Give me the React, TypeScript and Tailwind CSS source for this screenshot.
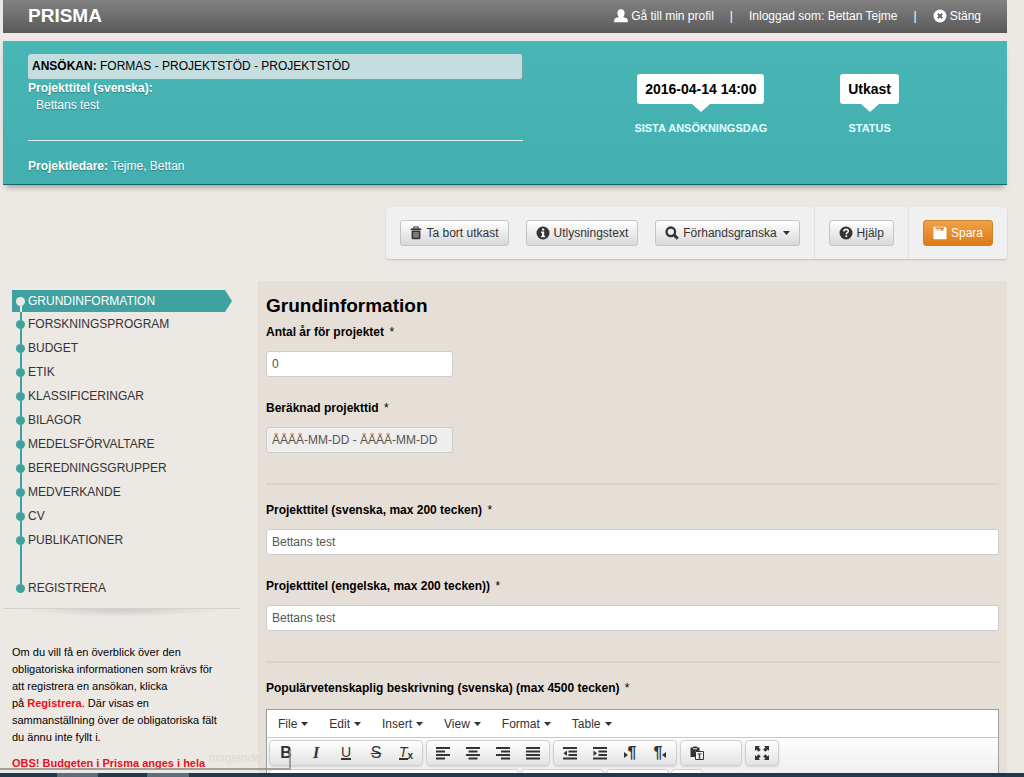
import React from 'react';
import clsx from 'clsx';

const steps = [
  'GRUNDINFORMATION',
  'FORSKNINGSPROGRAM',
  'BUDGET',
  'ETIK',
  'KLASSIFICERINGAR',
  'BILAGOR',
  'MEDELSFÖRVALTARE',
  'BEREDNINGSGRUPPER',
  'MEDVERKANDE',
  'CV',
  'PUBLIKATIONER',
];

const editorMenus = ['File', 'Edit', 'Insert', 'View', 'Format', 'Table'];

const UserIcon = () => (
  <svg viewBox="0 0 14 14" className="w-[14px] h-[14px]" fill="currentColor" aria-hidden="true">
    <path d="M7 .3c2.300 0 3.600 1.500 3.600 3.600 0 1.700-.6 2.800-1.300 3.500v.6c1.300.6 3.400 1 4 2 .5.800.6 2.100.6 3.300H.1c0-1.200.1-2.500.6-3.300.6-1 2.700-1.400 4-2v-.6C4 6.700 3.400 5.600 3.400 3.900 3.400 1.800 4.700.3 7 .3z" />
  </svg>
);

const CloseIcon = () => (
  <svg viewBox="0 0 14 14" className="w-[14px] h-[14px]" aria-hidden="true">
    <circle cx="7" cy="7" r="6.500" fill="currentColor" />
    <path d="M4.800 4.800l4.400 4.400M9.200 4.800L4.800 9.200" stroke="#6a6a6a" strokeWidth="2" />
  </svg>
);

const TrashIcon = () => (
  <svg viewBox="0 0 12 14" className="w-[12px] h-[14px]" aria-hidden="true">
    <path d="M4 2.500V1h4v1.500" stroke="currentColor" strokeWidth="1.200" fill="none" />
    <path d="M.8 3.200h10.400" stroke="currentColor" strokeWidth="1.600" />
    <path d="M1.600 4.600h8.800V12a1.200 1.200 0 0 1-1.200 1.200H2.800A1.200 1.200 0 0 1 1.600 12z" fill="currentColor" />
    <path d="M4 6v5.600M6 6v5.600M8 6v5.600" stroke="#e4e4e4" strokeWidth="0.800" />
  </svg>
);

const InfoIcon = () => (
  <svg viewBox="0 0 14 14" className="w-[14px] h-[14px]" aria-hidden="true">
    <circle cx="7" cy="7" r="6.500" fill="currentColor" />
    <path d="M6 2.500h2.200v2H6zM5 5.500h3.200v4.300h1v1.400H5V9.800h1V6.900H5z" fill="#f2f2f2" />
  </svg>
);

const SearchIcon = () => (
  <svg viewBox="0 0 14 14" className="w-[14px] h-[14px]" fill="none" stroke="currentColor" aria-hidden="true">
    <circle cx="5.800" cy="5.800" r="4.300" strokeWidth="2.300" />
    <path d="M8.800 8.800l4 4" strokeWidth="3" />
  </svg>
);

const HelpIcon = () => (
  <svg viewBox="0 0 14 14" className="w-[14px] h-[14px]" aria-hidden="true">
    <circle cx="7" cy="7" r="6.500" fill="currentColor" />
    <path d="M4.900 5.400c0-1.300.9-2 2.200-2s2.200.7 2.200 1.800c0 1.500-2 1.500-2 3" stroke="#f2f2f2" strokeWidth="1.600" fill="none" />
    <path d="M6.400 9.300h1.800V11H6.400z" fill="#f2f2f2" />
  </svg>
);

const SaveIcon = () => (
  <svg viewBox="0 0 14 14" className="w-[14px] h-[14px]" aria-hidden="true">
    <path d="M.5.800h11.500l1.500 1.500v11H.5z" fill="currentColor" />
    <path d="M2.500 1.500h8.500v3.500H2.500z" fill="#f7dab6" />
    <path d="M2.500 1.500h8.500v1.200H2.500zM8 1.500h2v3H8z" fill="#c98d45" />
  </svg>
);

const Caret = () => (
  <svg viewBox="0 0 7 4" className="w-[7px] h-[4px]" fill="currentColor" aria-hidden="true">
    <path d="M0 0h7L3.500 4z" />
  </svg>
);

const Lines = ({ d, arrow }: { d: string; arrow?: string }) => (
  <svg viewBox="0 0 14 14" className="w-[14px] h-[14px]" aria-hidden="true">
    <path d={d} stroke="currentColor" strokeWidth="2" fill="none" />
    {arrow && <path d={arrow} fill="currentColor" />}
  </svg>
);

const PasteIcon = () => (
  <svg viewBox="0 0 14 14" className="w-[14px] h-[14px]" aria-hidden="true">
    <path d="M.5 1.500h2.500V.5h4v1h2.500V5H5v6H.5z" fill="currentColor" />
    <path d="M3 2.800h4" stroke="#eee" strokeWidth="1" />
    <path d="M5.500 5.500h8v8h-8z" fill="#f4f4f4" stroke="currentColor" strokeWidth="1" />
    <path d="M7.500 8h4M9.500 8v4M8.500 12h2" stroke="currentColor" strokeWidth="1.200" />
  </svg>
);

const FullscreenIcon = () => (
  <svg viewBox="0 0 14 14" className="w-[14px] h-[14px]" aria-hidden="true">
    <path d="M0 0h5L3.600 1.400 5.800 3.600 3.600 5.800 1.400 3.600 0 5zM14 0v5l-1.400-1.400-2.200 2.200-2.200-2.200 2.200-2.200L9 0zM0 14V9l1.400 1.400 2.200-2.200 2.200 2.200-2.200 2.200L5 14zM14 14H9l1.400-1.400-2.200-2.200 2.200-2.200 2.200 2.200L14 9z" fill="currentColor" />
  </svg>
);

const alignLeft = 'M0 2h14M0 5.500h9M0 9h14M0 12.500h9';
const alignCenter = 'M0 2h14M2.500 5.500h9M0 9h14M2.500 12.500h9';
const alignRight = 'M0 2h14M5 5.500h9M0 9h14M5 12.500h9';
const justify = 'M0 2h14M0 5.500h14M0 9h14M0 12.500h14';
const indentLines = 'M0 2h14M5.500 5.500h8.500M5.500 9h8.500M0 12.500h14';

const formatGroup = [
  { name: 'Bold', icon: <span className="text-base font-bold">B</span> },
  { name: 'Italic', icon: <span className="font-[Liberation_Serif,serif] text-base font-bold italic">I</span> },
  { name: 'Underline', icon: <span className="border-b-2 border-[#333] text-sm leading-[12px]">U</span> },
  { name: 'Strikethrough', icon: <span className="text-base line-through">S</span> },
  {
    name: 'Clear formatting',
    icon: (
      <span className="flex items-end">
        <span className="border-b-2 border-[#333] text-sm italic leading-[12px]">T</span>
        <span className="text-[10px] leading-[8px] font-bold">x</span>
      </span>
    ),
  },
];

const alignGroup = [
  { name: 'Align left', icon: <Lines d={alignLeft} /> },
  { name: 'Align center', icon: <Lines d={alignCenter} /> },
  { name: 'Align right', icon: <Lines d={alignRight} /> },
  { name: 'Justify', icon: <Lines d={justify} /> },
];

const indentGroup = [
  { name: 'Decrease indent', icon: <Lines d={indentLines} arrow="M4 4.500v5.500L.5 7.200z" /> },
  { name: 'Increase indent', icon: <Lines d={indentLines} arrow="M.5 4.500v5.500L4 7.200z" /> },
  {
    name: 'Left to right',
    icon: (
      <span className="flex items-center">
        <svg viewBox="0 0 4 6" className="mt-1 w-[4px] h-[6px]" fill="currentColor" aria-hidden="true"><path d="M0 0v6l4-3z" /></svg>
        <span className="text-base font-bold">¶</span>
      </span>
    ),
  },
  {
    name: 'Right to left',
    icon: (
      <span className="flex items-center">
        <span className="text-base font-bold">¶</span>
        <svg viewBox="0 0 4 6" className="mt-1 w-[4px] h-[6px]" fill="currentColor" aria-hidden="true"><path d="M4 0v6L0 3z" /></svg>
      </span>
    ),
  },
];

interface Tool {
  name: string;
  icon: React.ReactNode;
  wide?: boolean;
}

const ToolGroup = ({ tools }: { tools: Tool[] }) => (
  <div className="flex rounded-sm border border-[#cfcfcf] bg-linear-to-b from-white to-[#e2e2e2] px-px shadow-sm">
    {tools.map((tool) => (
      <button
        key={tool.name}
        type="button"
        aria-label={tool.name}
        className={clsx(
          'flex h-6 items-center text-[#333]',
          tool.wide ? 'w-[58px] pl-2' : 'w-[30px] justify-center'
        )}
      >
        {tool.icon}
      </button>
    ))}
  </div>
);

interface FieldProps {
  id: string;
  label: string;
  value: string;
  short?: boolean;
  readOnly?: boolean;
}

const Field = ({ id, label, value, short, readOnly }: FieldProps) => (
  <div className="flex flex-col gap-[9px]">
    <label htmlFor={id} className="font-bold leading-5 text-black">
      {label} <span className="ml-[2px] font-normal">*</span>
    </label>
    <input
      id={id}
      type="text"
      defaultValue={value}
      readOnly={readOnly}
      className={clsx(
        'h-[26px] rounded-[3px] border border-[#ccc] px-[5px] text-[#555]',
        short ? 'w-[187px]' : 'w-full',
        readOnly ? 'bg-[#eee]' : 'bg-white'
      )}
    />
  </div>
);

const ActionButton = ({ children, primary }: { children: React.ReactNode; primary?: boolean }) => (
  <button
    type="button"
    className={clsx(
      'flex h-[26px] items-center gap-1 rounded-[3px] border px-[9px]',
      primary
        ? 'border-[#d0822a] bg-linear-to-b from-[#f0a145] to-[#dc7a14] text-white'
        : 'border-[#c4c4c4] bg-linear-to-b from-white to-[#d8d8d8] text-[#333]'
    )}
  >
    {children}
  </button>
);

const Bubble = ({ value, label }: { value: string; label: string }) => (
  <div className="flex flex-col items-center">
    <span className="rounded-[3px] bg-white px-2 text-sm leading-[30px] font-bold text-black">{value}</span>
    <svg viewBox="0 0 18 8" className="w-[18px] h-[8px]" fill="#fff" aria-hidden="true">
      <path d="M0 0h18L9 8z" />
    </svg>
    <span className="mt-2 text-[11px] leading-[17px] font-bold text-[#e2ffff]">{label}</span>
  </div>
);

const TopBar = () => (
  <header className="flex h-[33px] items-center justify-between bg-linear-to-b from-[#828282] to-[#5a5a5a] pr-[26px] pb-px pl-[25px] text-white">
    <h1 className="text-[19px] font-bold">PRISMA</h1>
    <nav className="flex items-center gap-4">
      <a href="#profil" className="flex items-center gap-[3px]"><UserIcon />Gå till min profil</a>
      <span>|</span>
      <span>Inloggad som: Bettan Tejme</span>
      <span>|</span>
      <a href="#stang" className="flex items-center gap-[3px]"><CloseIcon />Stäng</a>
    </nav>
  </header>
);

const ApplicationInfo = () => (
  <section className="mt-2 flex gap-[111px] border-b border-[#126a64] bg-linear-to-b from-[#49b6b6] to-[#43afb0] pt-[13px] pr-[108px] pb-[9px] pl-[25px] text-white shadow-[0_5px_6px_-3px_rgba(0,0,0,0.35)]">
    <div className="flex-1 [text-shadow:0_1px_1px_rgba(0,0,0,0.3)]">
      <p className="rounded-[3px] border-r border-b border-[#74a5a6] bg-[#c4dedf] px-1 leading-[25px] text-black [text-shadow:none]">
        <b>ANSÖKAN:</b> FORMAS - PROJEKTSTÖD - PROJEKTSTÖD
      </p>
      <p className="leading-[17px] font-bold">Projekttitel (svenska):</p>
      <p className="pl-2 leading-[17px]">Bettans test</p>
      <hr className="mt-[26px] mb-[17px] border-[#e0f4f4]" />
      <p className="leading-[17px]"><b>Projektledare:</b> Tejme, Bettan</p>
    </div>
    <div className="flex items-start gap-[73px] pt-5">
      <Bubble value="2016-04-14 14:00" label="SISTA ANSÖKNINGSDAG" />
      <Bubble value="Utkast" label="STATUS" />
    </div>
  </section>
);

const ActionBar = () => (
  <div className="mt-[22px] ml-auto flex w-fit divide-x divide-[#e4e2e0] rounded-[3px] bg-[#f0f0f0] shadow-[0_1px_2px_rgba(0,0,0,0.18)]">
    <div className="flex gap-[17px] px-[14px] py-[13px]">
      <ActionButton><TrashIcon />Ta bort utkast</ActionButton>
      <ActionButton><InfoIcon />Utlysningstext</ActionButton>
      <ActionButton><SearchIcon />Förhandsgranska <span className="ml-[2px]"><Caret /></span></ActionButton>
    </div>
    <div className="px-[14px] py-[13px]">
      <ActionButton><HelpIcon />Hjälp</ActionButton>
    </div>
    <div className="px-[14px] py-[13px]">
      <ActionButton primary><SaveIcon />Spara</ActionButton>
    </div>
  </div>
);

interface StepProps {
  name: string;
  first?: boolean;
  last?: boolean;
}

const Step = ({ name, first, last }: StepProps) => (
  <li>
    <a
      href={`#${name.toLowerCase()}`}
      className={clsx(
        'flex items-center gap-[3px] pl-1',
        first
          ? 'h-[22px] w-[220px] bg-[#40a2a0] text-white [clip-path:polygon(0_0,213px_0,100%_50%,213px_100%,0_100%)]'
          : 'h-6 text-[#333]'
      )}
    >
      <span className="flex w-[9px] flex-col items-center self-stretch">
        <span className={clsx('w-[2px] flex-1', !first && 'bg-[#40a2a0]')} />
        <span className={clsx('size-[9px] rounded-full', first ? 'bg-[#ece8e4]' : 'bg-[#40a2a0]')} />
        <span className={clsx('w-[2px] flex-1', first && 'bg-[#ece8e4]', !first && !last && 'bg-[#40a2a0]')} />
      </span>
      {name}
    </a>
  </li>
);

const Sidebar = () => (
  <aside className="w-[237px] shrink-0 pt-[9px]">
    <ul className="pl-[9px]">
      {steps.map((name, i) => (
        <Step key={name} name={name} first={i === 0} />
      ))}
      <li className="flex h-6 pl-1" aria-hidden="true">
        <span className="flex w-[9px] justify-center"><span className="w-[2px] bg-[#40a2a0]" /></span>
      </li>
      <Step name="REGISTRERA" last />
    </ul>
    <div className="mt-2 h-px bg-[#d4d0cc]" />
    <div className="mx-4 h-2 bg-[radial-gradient(ellipse_at_top,#cecac7,transparent_70%)]" />
    <div className="flex flex-col gap-[9px] pt-[27px] pr-2 pl-[9px] text-[11px] leading-[17px] text-black">
      <p>
        Om du vill få en överblick över den<br />
        obligatoriska informationen som krävs för<br />
        att registrera en ansökan, klicka<br />
        på <a href="#registrera" className="font-bold text-[#e8101a]">Registrera</a>. Där visas en<br />
        sammanställning över de obligatoriska fält<br />
        du ännu inte fyllt i.
      </p>
      <p className="font-bold whitespace-nowrap text-[#e8101a]">OBS! Budgeten i Prisma anges i hela</p>
    </div>
  </aside>
);

const Editor = () => (
  <div className="mt-[11px] border border-[#9e9e9e] bg-white">
    <div className="flex h-7 gap-px border-b border-[#c8c8c8] pl-px">
      {editorMenus.map((menu) => (
        <button key={menu} type="button" className="flex items-center gap-1 px-[10px] text-[#333]">
          {menu} <Caret />
        </button>
      ))}
    </div>
    <div className="flex flex-col gap-[3px] bg-linear-to-b from-[#fdfdfd] to-[#e6e6e6] py-[2px] pl-[2px]">
      <div className="flex gap-[3px]">
        <ToolGroup tools={formatGroup} />
        <ToolGroup tools={alignGroup} />
        <ToolGroup tools={indentGroup} />
        <ToolGroup tools={[{ name: 'Paste as text', icon: <PasteIcon />, wide: true }]} />
        <ToolGroup tools={[{ name: 'Fullscreen', icon: <FullscreenIcon /> }]} />
      </div>
      <div className="flex h-[26px] gap-[2px]">
        <div className="w-[250px] rounded-sm border border-[#cfcfcf] bg-white" />
        <div className="w-[83px] rounded-sm border border-[#cfcfcf] bg-white" />
        <div className="w-[63px] rounded-sm border border-[#cfcfcf] bg-white" />
        <div className="w-[32px] rounded-sm border border-[#cfcfcf] bg-white" />
      </div>
    </div>
  </div>
);

const FormPanel = () => (
  <main className="min-w-0 flex-1 bg-[#e6dfd8] px-2 pt-[13px]">
    <h2 className="mb-1 text-[19px] leading-6 font-bold text-black">Grundinformation</h2>
    <div className="flex flex-col gap-[21px]">
      <Field id="years" label="Antal år för projektet" value="0" short />
      <Field id="period" label="Beräknad projekttid" value="ÅÅÅÅ-MM-DD - ÅÅÅÅ-MM-DD" short readOnly />
    </div>
    <hr className="mt-[30px] mb-[15px] border-t-2 border-[#dad3cd]" />
    <div className="flex flex-col gap-[21px]">
      <Field id="title-sv" label="Projekttitel (svenska, max 200 tecken)" value="Bettans test" />
      <Field id="title-en" label="Projekttitel (engelska, max 200 tecken))" value="Bettans test" />
    </div>
    <hr className="mt-[30px] mb-[15px] border-t-2 border-[#dad3cd]" />
    <h3 className="leading-5 font-bold text-black">
      Populärvetenskaplig beskrivning (svenska) (max 4500 tecken) <span className="ml-[2px] font-normal">*</span>
    </h3>
    <Editor />
  </main>
);

const App = () => {
  return (
    <div className="flex h-screen flex-col bg-[#ece8e4] font-[Liberation_Sans,Arial,sans-serif] text-xs">
      <div className="relative min-h-0 flex-1 overflow-hidden pr-[17px] pl-[3px]">
        <TopBar />
        <ApplicationInfo />
        <ActionBar />
        <div className="mt-[22px] flex gap-[18px]">
          <Sidebar />
          <FormPanel />
        </div>
        {/* browser status bubble */}
        <div className="absolute bottom-[3px] left-0 h-[20px] w-[291px] border-r-2 border-b-2 border-[#8f8c88]/80 pr-7 text-right text-[#ddd8d3]">
          mageinde
        </div>
      </div>
      {/* taskbar edge */}
      <div className="flex h-[4px] bg-[#22384f] pl-[57px]">
        <div className="w-[41px] bg-[#5d6d7d]" />
        <div className="ml-[49px] w-[42px] bg-[#5d6d7d]" />
      </div>
    </div>
  );
};

export default App;
